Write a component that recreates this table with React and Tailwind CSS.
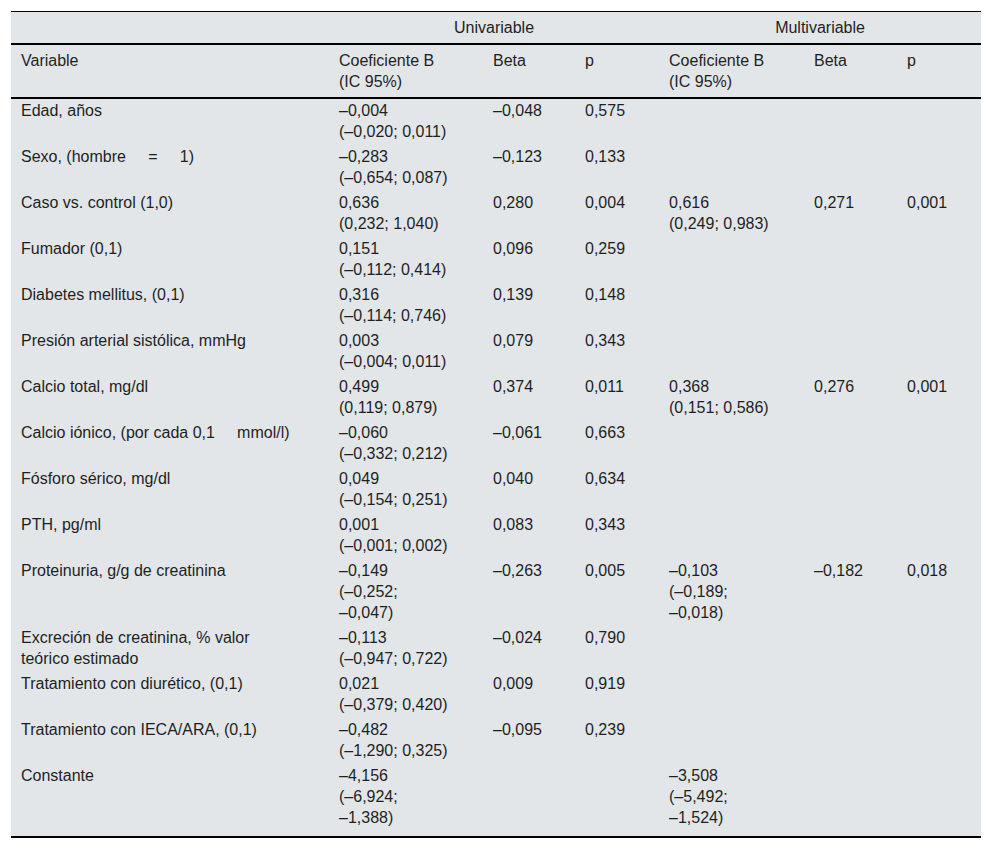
import React from "react";

const rows = [
  { v: "Edad, años", c: ["–0,004", "(–0,020; 0,011)"], b: "–0,048", p: "0,575" },
  { v: "Sexo, (hombre     =     1)", c: ["–0,283", "(–0,654; 0,087)"], b: "–0,123", p: "0,133" },
  {
    v: "Caso vs. control (1,0)",
    c: ["0,636", "(0,232; 1,040)"],
    b: "0,280",
    p: "0,004",
    mc: ["0,616", "(0,249; 0,983)"],
    mb: "0,271",
    mp: "0,001",
  },
  { v: "Fumador (0,1)", c: ["0,151", "(–0,112; 0,414)"], b: "0,096", p: "0,259" },
  { v: "Diabetes mellitus, (0,1)", c: ["0,316", "(–0,114; 0,746)"], b: "0,139", p: "0,148" },
  { v: "Presión arterial sistólica, mmHg", c: ["0,003", "(–0,004; 0,011)"], b: "0,079", p: "0,343" },
  {
    v: "Calcio total, mg/dl",
    c: ["0,499", "(0,119; 0,879)"],
    b: "0,374",
    p: "0,011",
    mc: ["0,368", "(0,151; 0,586)"],
    mb: "0,276",
    mp: "0,001",
  },
  { v: "Calcio iónico, (por cada 0,1     mmol/l)", c: ["–0,060", "(–0,332; 0,212)"], b: "–0,061", p: "0,663" },
  { v: "Fósforo sérico, mg/dl", c: ["0,049", "(–0,154; 0,251)"], b: "0,040", p: "0,634" },
  { v: "PTH, pg/ml", c: ["0,001", "(–0,001; 0,002)"], b: "0,083", p: "0,343" },
  {
    v: "Proteinuria, g/g de creatinina",
    c: ["–0,149", "(–0,252;", "–0,047)"],
    b: "–0,263",
    p: "0,005",
    mc: ["–0,103", "(–0,189;", "–0,018)"],
    mb: "–0,182",
    mp: "0,018",
  },
  { v: "Excreción de creatinina, % valor\nteórico estimado", c: ["–0,113", "(–0,947; 0,722)"], b: "–0,024", p: "0,790" },
  { v: "Tratamiento con diurético, (0,1)", c: ["0,021", "(–0,379; 0,420)"], b: "0,009", p: "0,919" },
  { v: "Tratamiento con IECA/ARA, (0,1)", c: ["–0,482", "(–1,290; 0,325)"], b: "–0,095", p: "0,239" },
  {
    v: "Constante",
    c: ["–4,156", "(–6,924;", "–1,388)"],
    mc: ["–3,508", "(–5,492;", "–1,524)"],
  },
];

function Lines({ items }) {
  if (!items) return null;
  return items.map((t, i) => <div key={i}>{t}</div>);
}

export default function App() {
  const td = "align-top px-[10px] pt-[1px] pb-[3px]";
  const th = "font-normal text-left align-top px-[10px] py-[5px]";
  return (
    <div className="min-h-screen bg-white pt-[11px] pl-[11px]">
      <div
        className="w-[970px] bg-[#e2e6e9] text-[16px] leading-[21px] text-[#1f1f1f] border-t border-b-2 border-black pb-[5px]"
        style={{ fontFamily: '"Liberation Sans", Arial, sans-serif' }}
      >
        <table className="w-full border-collapse table-fixed">
          <colgroup>
            <col className="w-[318px]" />
            <col className="w-[154px]" />
            <col className="w-[92px]" />
            <col className="w-[84px]" />
            <col className="w-[145px]" />
            <col className="w-[93px]" />
            <col className="w-[84px]" />
          </colgroup>
          <thead>
            <tr className="border-b-2 border-black">
              <th className="font-normal py-[5px]"></th>
              <th colSpan={3} className="font-normal py-[5px] text-center">
                Univariable
              </th>
              <th colSpan={3} className="font-normal py-[5px] text-center">
                Multivariable
              </th>
            </tr>
            <tr className="border-b-2 border-black">
              <th className={th}>Variable</th>
              <th className={th}>
                <div>Coeficiente B</div>
                <div>(IC 95%)</div>
              </th>
              <th className={th}>Beta</th>
              <th className={th}>p</th>
              <th className={th}>
                <div>Coeficiente B</div>
                <div>(IC 95%)</div>
              </th>
              <th className={th}>Beta</th>
              <th className={th}>p</th>
            </tr>
          </thead>
          <tbody>
            {rows.map((r, i) => (
              <tr key={i}>
                <td className={`${td} whitespace-pre-wrap`}>{r.v}</td>
                <td className={td}>
                  <Lines items={r.c} />
                </td>
                <td className={td}>{r.b}</td>
                <td className={td}>{r.p}</td>
                <td className={td}>
                  <Lines items={r.mc} />
                </td>
                <td className={td}>{r.mb}</td>
                <td className={td}>{r.mp}</td>
              </tr>
            ))}
          </tbody>
        </table>
      </div>
    </div>
  );
}
